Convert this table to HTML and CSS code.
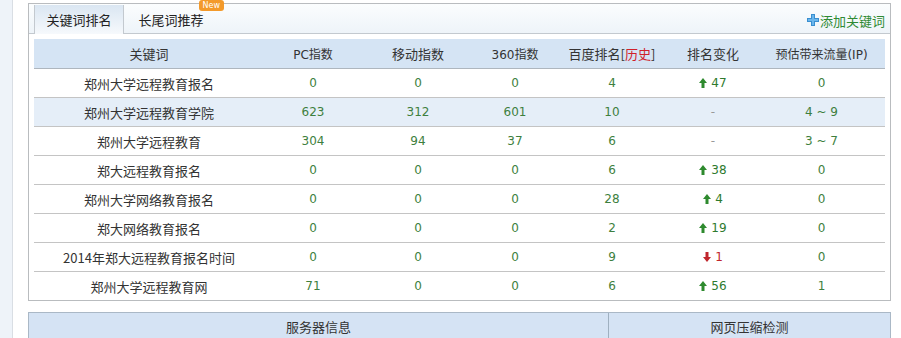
FILE: index.html
```html
<!DOCTYPE html>
<html lang="zh">
<head>
<meta charset="utf-8">
<link rel="stylesheet" href="styles.css">
</head>
<body>
<div class="page">
  <div class="side"></div>
  <div class="main">
    <div class="panel">
      <div class="tabbar">
        <div class="tab active">关键词排名</div>
        <div class="tab">长尾词推荐<span class="badge">New</span></div>
        <a class="add"><svg class="plus" width="12" height="12" viewBox="0 0 12 12"><path d="M4 0h4v4h4v4H8v4H4V8H0V4h4z" fill="#3a8fd0"/><path d="M5 1h2v4h4v2H7v4H5V7H1V5h4z" fill="#6bb6ec"/></svg>添加关键词</a>
      </div>
      <div class="tablewrap">
        <table class="kw">
          <colgroup>
            <col class="c1"><col class="c2"><col class="c3"><col class="c4"><col class="c5"><col class="c6"><col class="c7">
          </colgroup>
          <thead>
            <tr><th>关键词</th><th>PC指数</th><th>移动指数</th><th>360指数</th><th>百度排名<span class="hist">[<em>历史</em>]</span></th><th>排名变化</th><th>预估带来流量(IP)</th></tr>
          </thead>
          <tbody>
            <tr><td class="name">郑州大学远程教育报名</td><td>0</td><td>0</td><td>0</td><td>4</td><td><span class="up"><svg width="8" height="10" viewBox="0 0 8 10"><path d="M4 0L8 5H5.5V10H2.5V5H0z" fill="#2e8a2e"/></svg>47</span></td><td>0</td></tr>
            <tr class="alt"><td class="name">郑州大学远程教育学院</td><td>623</td><td>312</td><td>601</td><td>10</td><td class="dash">-</td><td>4 ~ 9</td></tr>
            <tr><td class="name">郑州大学远程教育</td><td>304</td><td>94</td><td>37</td><td>6</td><td class="dash">-</td><td>3 ~ 7</td></tr>
            <tr><td class="name">郑大远程教育报名</td><td>0</td><td>0</td><td>0</td><td>6</td><td><span class="up"><svg width="8" height="10" viewBox="0 0 8 10"><path d="M4 0L8 5H5.5V10H2.5V5H0z" fill="#2e8a2e"/></svg>38</span></td><td>0</td></tr>
            <tr><td class="name">郑州大学网络教育报名</td><td>0</td><td>0</td><td>0</td><td>28</td><td><span class="up"><svg width="8" height="10" viewBox="0 0 8 10"><path d="M4 0L8 5H5.5V10H2.5V5H0z" fill="#2e8a2e"/></svg>4</span></td><td>0</td></tr>
            <tr><td class="name">郑大网络教育报名</td><td>0</td><td>0</td><td>0</td><td>2</td><td><span class="up"><svg width="8" height="10" viewBox="0 0 8 10"><path d="M4 0L8 5H5.5V10H2.5V5H0z" fill="#2e8a2e"/></svg>19</span></td><td>0</td></tr>
            <tr><td class="name">2014年郑大远程教育报名时间</td><td>0</td><td>0</td><td>0</td><td>9</td><td><span class="down"><svg width="8" height="10" viewBox="0 0 8 10"><path d="M4 10L8 5H5.5V0H2.5V5H0z" fill="#c0262c"/></svg>1</span></td><td>0</td></tr>
            <tr class="last"><td class="name">郑州大学远程教育网</td><td>71</td><td>0</td><td>0</td><td>6</td><td><span class="up"><svg width="8" height="10" viewBox="0 0 8 10"><path d="M4 0L8 5H5.5V10H2.5V5H0z" fill="#2e8a2e"/></svg>56</span></td><td>1</td></tr>
          </tbody>
        </table>
      </div>
    </div>
    <div class="lower">
      <div class="lcell server">服务器信息</div>
      <div class="lcell gzip">网页压缩检测</div>
    </div>
  </div>
</div>
</body>
</html>
```
FILE: styles.css
```css
html, body {
  margin: 0;
  padding: 0;
  background: #ffffff;
}
body {
  font-family: "Noto Sans CJK SC", "DejaVu Sans", sans-serif;
  font-size: 13px;
  color: #333;
}
.page {
  display: flex;
  height: 338px;
  overflow: hidden;
}
.side {
  width: 12px;
  flex: none;
  background: #eef3f9;
  border-right: 1px solid #d9dee4;
}
.main {
  flex: 1;
  padding: 3px 10px 0 15px;
}
.panel {
  border: 1px solid #b9bcbf;
  background: #fff;
}
.tabbar {
  height: 29px;
  display: flex;
  align-items: stretch;
  padding-left: 5px;
  background: linear-gradient(#fbfdfe, #eef4f9);
  border-bottom: 1px solid #c3c9cf;
  position: relative;
}
.tab {
  width: 88px;
  display: flex;
  align-items: center;
  justify-content: center;
  font-size: 13px;
  color: #222;
  position: relative;
  margin-top: 1px;
}
.tab.active {
  background: linear-gradient(#dae6f2, #f6f9fc);
  border-left: 1px solid #c3c9cf;
  border-right: 1px solid #c3c9cf;
  margin-bottom: -1px;
  width: 88px;
}
.tab:nth-child(2) {
  width: 94px;
}
.badge {
  position: absolute;
  top: -5px;
  right: -6px;
  background: #f39a2b;
  color: #fff;
  font-family: "DejaVu Sans", sans-serif;
  font-size: 8px;
  line-height: 11px;
  padding: 0 4px;
  border-radius: 3px;
}
.add {
  margin-left: auto;
  margin-right: 5px;
  display: flex;
  align-items: center;
  color: #2f8a33;
  font-size: 13px;
  padding-top: 3px;
}
.plus {
  margin-right: 1px;
}
.tablewrap {
  padding: 5px 5px 0 5px;
}
.kw {
  width: 100%;
  border-collapse: collapse;
  table-layout: fixed;
}
.c1 { width: 230px; }
.c2 { width: 98px; }
.c3 { width: 112px; }
.c4 { width: 82px; }
.c5 { width: 112px; }
.c6 { width: 90px; }
.c7 { width: auto; }
.kw th {
  height: 29px;
  background: #d5e4f4;
  font-weight: normal;
  color: #333;
  border-bottom: 1px solid #aeb6be;
  padding: 0;
  font-size: 13px;
}
.kw th:nth-child(2), .kw th:nth-child(4), .kw th:nth-child(7) {
  font-family: "DejaVu Sans", "Noto Sans CJK SC", sans-serif;
  font-size: 12px;
}
.hist em {
  font-style: normal;
  color: #d0202a;
}
.kw td {
  height: 28px;
  padding: 0;
  text-align: center;
  border-bottom: 1px solid #c4c4c4;
  color: #3e7f3e;
  font-family: "DejaVu Sans", sans-serif;
  font-size: 12px;
}
.kw tr.last td {
  border-bottom: none;
}
.kw td.name {
  color: #333;
  font-family: "Noto Sans CJK SC", "DejaVu Sans", sans-serif;
  font-size: 13px;
}
.kw td.dash {
  color: #999;
}
.kw tr.alt td {
  background: #e5eef8;
}
.up, .down {
  display: inline-flex;
  align-items: center;
  gap: 4px;
}
.up { color: #2e7a2e; }
.down { color: #c0262c; }
.lower {
  margin-top: 11px;
  display: flex;
  height: 26px;
  background: #d5e3f4;
  border: 1px solid #aab8c6;
  border-bottom: none;
}
.lcell {
  display: flex;
  align-items: center;
  justify-content: center;
  color: #333;
  font-size: 13px;
}
.server {
  width: 579px;
  border-right: 1px solid #9fb0c0;
}
.gzip {
  flex: 1;
}
```
